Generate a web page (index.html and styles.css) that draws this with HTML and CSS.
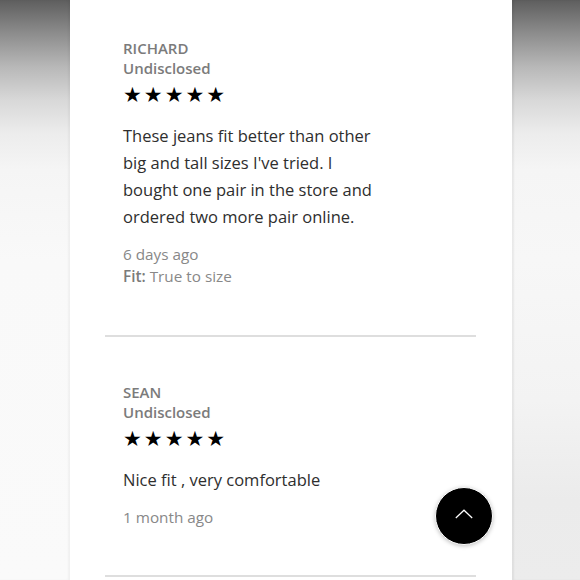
FILE: index.html
```html
<!DOCTYPE html>
<html>
<head>
<meta charset="utf-8">
<link rel="stylesheet" href="styles.css">
</head>
<body>
<div class="stage">
  <div class="side side-left"></div>
  <main class="panel">
    <section class="review first">
      <div class="name">RICHARD</div>
      <div class="meta">Undisclosed</div>
      <div class="stars">★★★★★</div>
      <p class="text">These jeans fit better than other big and tall sizes I've tried. I bought one pair in the store and ordered two more pair online.</p>
      <div class="when">6 days ago</div>
      <div class="fit"><b>Fit:</b> True to size</div>
    </section>
    <hr class="divider">
    <section class="review second">
      <div class="name">SEAN</div>
      <div class="meta">Undisclosed</div>
      <div class="stars">★★★★★</div>
      <p class="text">Nice fit , very comfortable</p>
      <div class="when">1 month ago</div>
    </section>
    <hr class="divider">
    <button class="top-btn" aria-label="Back to top">
      <svg width="18" height="10" viewBox="0 0 18 10"><path d="M0.8 9 L9 1.2 L17.2 9" fill="none" stroke="#fff" stroke-width="1.2"/></svg>
    </button>
  </main>
  <div class="side side-right"></div>
</div>
</body>
</html>
```
FILE: styles.css
```css
html, body {
  margin: 0;
  padding: 0;
  width: 580px;
  height: 580px;
  overflow: hidden;
}
body {
  font-family: "Open Sans", "Noto Sans", sans-serif;
}
.stage {
  display: flex;
  width: 580px;
  height: 580px;
}
.side {
  flex: 0 0 auto;
  height: 580px;
}
.side-left {
  width: 70px;
  background: linear-gradient(to bottom, #5e5e5e 0px, #8c8c8c 33px, #b8b8b8 67px, #d8d8d8 100px, #ececec 133px, #f5f5f5 170px, #f9f9f9 260px, #fafafa 580px);
  box-shadow: inset -2px 0 2px rgba(0,0,0,0.04);
}
.side-right {
  width: 68px;
  background: linear-gradient(to bottom, #5e5e5e 0px, #8c8c8c 33px, #b8b8b8 67px, #d8d8d8 100px, #ececec 133px, #f5f5f5 170px, #f7f7f7 260px, #f3f3f3 400px, #ebebeb 500px, #ececec 580px);
  box-shadow: inset 2px 0 2px rgba(0,0,0,0.06);
}
.panel {
  position: relative;
  width: 442px;
  height: 580px;
  background: #fff;
  padding: 0 36px 0 35px;
  box-sizing: border-box;
}
.review {
  padding-left: 18px;
}
.review.first {
  padding-top: 38px;
  padding-bottom: 48px;
}
.review.second {
  padding-top: 45px;
  padding-bottom: 47px;
}
.name, .meta {
  font-size: 15px;
  font-weight: 600;
  color: #7b7b7b;
  line-height: 20px;
}
.stars {
  font-family: "DejaVu Sans", sans-serif;
  font-size: 21px;
  letter-spacing: 2px;
  color: #000;
  line-height: 30px;
  margin-top: 2px;
}
.text {
  margin: 12px 0 13px;
  font-size: 16.5px;
  line-height: 27px;
  color: #2e2e2e;
  width: 260px;
}
.when, .fit {
  font-size: 15.3px;
  line-height: 22px;
  color: #888;
}
.fit b {
  font-weight: 600;
  color: #7b7b7b;
}
.divider {
  margin: 0;
  border: 0;
  height: 2px;
  background: #dedede;
}
.top-btn {
  position: absolute;
  left: 365px;
  top: 487px;
  width: 58px;
  height: 58px;
  border-radius: 50%;
  background: #000;
  border: 1px solid #fff;
  box-shadow: 0 1px 4px rgba(0,0,0,0.25);
  display: flex;
  align-items: center;
  justify-content: center;
  padding: 0 0 4px;
  cursor: pointer;
}
```
